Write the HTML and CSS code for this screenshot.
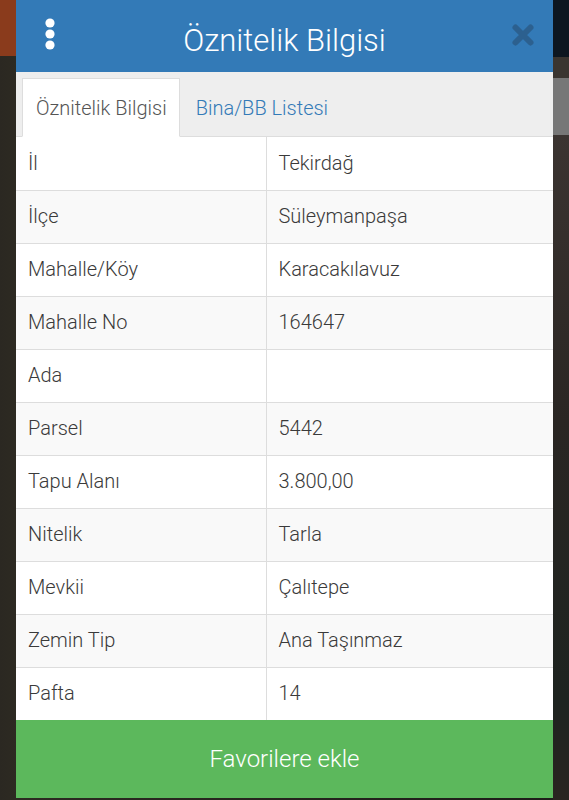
FILE: index.html
```html
<!DOCTYPE html>
<html lang="tr">
<head>
  <meta charset="UTF-8" />
  <meta name="viewport" content="width=device-width, initial-scale=1.0">
  <title>Öznitelik Bilgisi</title>
  <link rel="stylesheet" href="styles.css">
</head>
<body>

<!-- Map backdrop with the modal on top -->
<div class="map-bg">

  <div class="modal">

    <!-- Header -->
    <div class="modal-head">
      <button class="menu-btn" aria-label="Menü">
        <svg width="12" height="32" viewBox="0 0 12 32">
          <circle cx="6" cy="5" r="4.6" fill="#fff"/>
          <circle cx="6" cy="16" r="4.6" fill="#fff"/>
          <circle cx="6" cy="27" r="4.6" fill="#fff"/>
        </svg>
      </button>
      <h1 class="modal-title">Öznitelik Bilgisi</h1>
      <button class="close-btn" aria-label="Kapat">
        <svg width="24" height="24" viewBox="0 0 24 24">
          <path d="M4.5 4.5 L19.5 19.5 M19.5 4.5 L4.5 19.5" stroke="#2c608f" stroke-width="6" stroke-linecap="round"/>
        </svg>
      </button>
    </div>

    <!-- Tabs -->
    <div class="tabs">
      <span class="tab active">Öznitelik Bilgisi</span>
      <span class="tab">Bina/BB Listesi</span>
    </div>

    <!-- Attribute table -->
    <table class="attr-table">
      <tr><td>İl</td><td>Tekirdağ</td></tr>
      <tr><td>İlçe</td><td>Süleymanpaşa</td></tr>
      <tr><td>Mahalle/Köy</td><td>Karacakılavuz</td></tr>
      <tr><td>Mahalle No</td><td>164647</td></tr>
      <tr><td>Ada</td><td></td></tr>
      <tr><td>Parsel</td><td>5442</td></tr>
      <tr><td>Tapu Alanı</td><td>3.800,00</td></tr>
      <tr><td>Nitelik</td><td>Tarla</td></tr>
      <tr><td>Mevkii</td><td>Çalıtepe</td></tr>
      <tr><td>Zemin Tip</td><td>Ana Taşınmaz</td></tr>
      <tr><td>Pafta</td><td>14</td></tr>
    </table>

    <!-- Footer button -->
    <button class="fav-btn">Favorilere ekle</button>

  </div>
</div>

</body>
</html>
```

FILE: styles.css
```css
/* ----------  COLORS  ---------- */
:root{
  --head-blue:  #337ab7;
  --close-blue: #2c608f;
  --tab-bg:     #eeeeee;
  --line:       #dddddd;
  --stripe:     #f9f9f9;
  --text:       #3a3a3a;
  --green:      #5cb85c;
}

*{box-sizing:border-box}

body{
  margin:0;
  font-family:Roboto,'Liberation Sans',sans-serif;
  font-weight:300;
  background:#26221e;
}

/* ----------  MAP BACKDROP  ---------- */
.map-bg{
  height:800px;
  padding:0 16px;
  background:
    linear-gradient(to bottom, #8a3b1c 0, #8a3b1c 56px, transparent 56px),
    linear-gradient(to right, #2b2822 0, #2d2a22 16px, #1f1d1a 553px, #1c1e1c 569px);
  position:relative;
}
.map-bg::after{
  /* right strip colours */
  content:"";
  position:absolute; top:0; right:0;
  width:16px; height:800px;
  background:linear-gradient(to bottom,
    #0d1620 0, #0d1620 57px, #3a3530 57px, #3a3530 78px,
    #777 78px, #777 135px, #3b3431 135px, #2a2623 420px, #1e2420 700px, #2a2420 800px);
}

/* ----------  MODAL  ---------- */
.modal{
  width:537px;
  display:flex; flex-direction:column;
  background:#fff;
}

.modal-head{
  height:72px;
  background:var(--head-blue);
  display:flex; align-items:center;
  padding:0 18px 0 28px;
}
.menu-btn,.close-btn{
  background:none; border:none; padding:0;
  display:flex; cursor:pointer;
}
.menu-btn{margin-top:-5px}
.modal-title{
  flex:1; margin:0;
  text-align:center;
  color:#fff;
  font-size:31px; font-weight:300;
  padding:8px 0 0 2px;
}
.close-btn{margin-top:-2px}

/* ----------  TABS  ---------- */
.tabs{
  height:65px;
  background:var(--tab-bg);
  display:flex; align-items:flex-end;
  padding:0 6px;
  border-bottom:1px solid var(--line);
}
.tab{
  height:59px;
  display:flex; align-items:center;
  padding:0 16px;
  font-size:20px;
  color:var(--head-blue);
  margin-bottom:-1px;
}
.tab.active{
  background:#fff;
  color:#555;
  padding:0 12px 0 13px;
  border:1px solid var(--line);
  border-bottom-color:#fff;
}

/* ----------  TABLE  ---------- */
.attr-table{
  width:100%;
  border-collapse:collapse;
  font-size:20px;
  color:var(--text);
}
.attr-table tr:nth-child(even){background:var(--stripe)}
.attr-table td{
  height:53px;
  padding:0 12px 1px 12px;
  border-top:1px solid var(--line);
  vertical-align:middle;
}
.attr-table tr:first-child td{border-top:none}
.attr-table td:first-child{
  width:250px;
  border-right:1px solid var(--line);
}

/* ----------  FAVOURITE BUTTON  ---------- */
.fav-btn{
  height:78px;
  border:none;
  background:var(--green);
  color:#fff;
  font-family:inherit;
  font-weight:300;
  font-size:24px;
  cursor:pointer;
}
```
